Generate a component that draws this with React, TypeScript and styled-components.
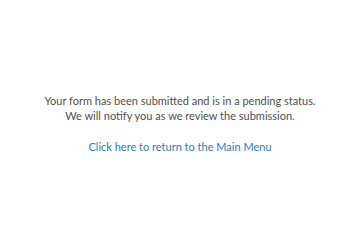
import styled, { createGlobalStyle } from "styled-components";

const GlobalStyle = createGlobalStyle`
  html, body {
    margin: 0;
    padding: 0;
    background: #ffffff;
  }
`;

const Page = styled.div`
  width: 360px;
  height: 250px;
  box-sizing: border-box;
  padding-bottom: 4px;

  display: flex;
  flex-direction: column;
  justify-content: center;
  align-items: center;

  font-family: "Lato", "Open Sans", sans-serif;
  font-size: 11px;
`;

const Message = styled.p`
  margin: 0;
  color: #4f4f4f;
  line-height: 15px;
  text-align: center;
`;

const MenuLink = styled.a`
  margin-top: 16px;
  color: #2b7bbf;
  line-height: 15px;
  text-decoration: none;
  cursor: pointer;
`;

function App() {
  return (
    <>
      <GlobalStyle />
      <Page>
        <Message>
          Your form has been submitted and is in a pending status.
          <br />
          We will notify you as we review the submission.
        </Message>
        <MenuLink href="#">Click here to return to the Main Menu</MenuLink>
      </Page>
    </>
  );
}

export default App;
